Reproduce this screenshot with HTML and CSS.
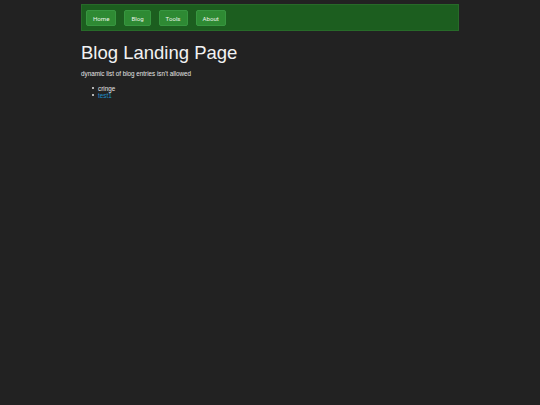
FILE: index.html
```html
<!DOCTYPE html>
<html lang="en">
<head>
<meta charset="utf-8">
<title>Blog Landing Page</title>
<link rel="stylesheet" href="styles.css">
</head>
<body>
<div class="page">
  <nav class="nav">
    <a class="nav-btn" href="#">Home</a>
    <a class="nav-btn" href="#">Blog</a>
    <a class="nav-btn" href="#">Tools</a>
    <a class="nav-btn" href="#">About</a>
  </nav>
  <h1 class="title">Blog Landing Page</h1>
  <p class="intro">dynamic list of blog entries isn't allowed</p>
  <ul class="entries">
    <li class="entry">cringe</li>
    <li class="entry"><a class="entry-link" href="#">test1</a></li>
  </ul>
</div>
</body>
</html>
```
FILE: styles.css
```css
html, body {
  margin: 0;
  padding: 0;
  background: #222222;
  color: #e6e6e6;
  font-family: "Liberation Sans", Arial, sans-serif;
}

.page {
  width: 378px;
  margin: 0 auto;
  padding-top: 4px;
}

.nav {
  display: flex;
  gap: 8px;
  padding: 0 4px;
  background: #1c5e1f;
  border: 1px solid #276a29;
  box-sizing: border-box;
  height: 27px;
  align-items: center;
}

.nav-btn {
  display: block;
  padding: 0 6px;
  height: 16px;
  line-height: 16px;
  font-family: Roboto, "Liberation Sans", sans-serif;
  font-size: 6.1px;
  color: #e8f2e8;
  text-decoration: none;
  background: #2e8a33;
  border: 1px solid #379640;
  border-radius: 2px;
  box-sizing: border-box;
}

.title {
  margin: 11px 0 0;
  font-size: 18.5px;
  line-height: 22px;
  font-weight: normal;
  color: #f2f2f2;
}

.intro {
  margin: 6px 0 0;
  font-size: 6.3px;
  line-height: 8px;
}

.entries {
  margin: 6.5px 0 0;
  padding-left: 11px;
  list-style: none;
  font-size: 6.3px;
  line-height: 7px;
}

.entry {
  display: flex;
  align-items: center;
}

.entry::before {
  content: "";
  width: 2px;
  height: 2px;
  margin-right: 4px;
  background: #e6e6e6;
  border-radius: 50%;
  flex: none;
}

.entry-link {
  color: #1f8fc8;
  text-decoration: none;
}
```
